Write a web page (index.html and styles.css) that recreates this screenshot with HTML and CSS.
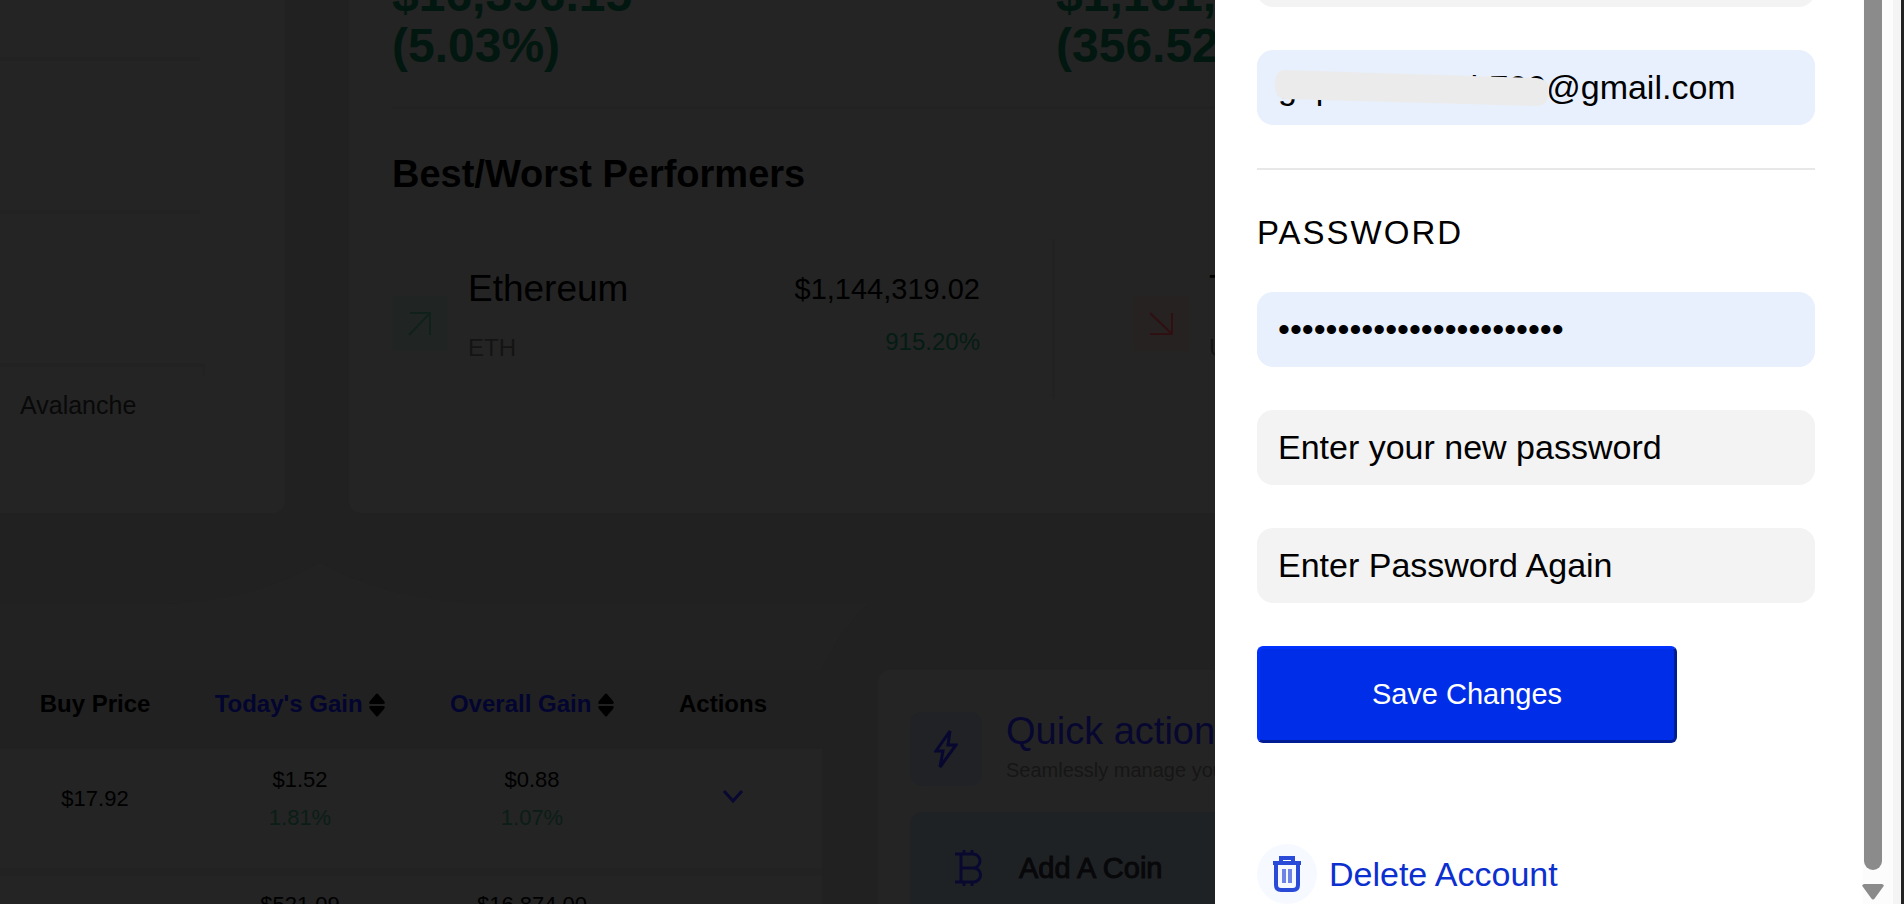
FILE: index.html
```html
<!DOCTYPE html>
<html lang="en">
<head>
    <meta charset="UTF-8">
    <meta name="viewport" content="width=device-width, initial-scale=1.0">
    <title>Account Settings</title>
    <link rel="stylesheet" href="styles.css">
</head>
<body>
    <main class="dashboard">
        <div class="top-row">
            <section class="card chart">
                <div class="grid-line"></div>
                <div class="grid-line"></div>
                <div class="grid-line last"></div>
                <p class="axis-label">Avalanche</p>
            </section>
            <section class="card summary">
                <div class="stats">
                    <p>$16,396.15<br>(5.03%)</p>
                    <p>$1,161,152.31<br>(356.52%)</p>
                </div>
                <h2>Best/Worst Performers</h2>
                <div class="performers">
                    <div class="performer best">
                        <span class="trend up">
                            <svg width="26" height="26" viewBox="0 0 26 26"><path d="M2 24L23 2M3 2h20v22"/></svg>
                        </span>
                        <div>
                            <p class="coin">Ethereum</p>
                            <p class="ticker">ETH</p>
                        </div>
                        <div class="value">
                            <p class="price">$1,144,319.02</p>
                            <p class="percent">915.20%</p>
                        </div>
                    </div>
                    <div class="performer worst">
                        <span class="trend down">
                            <svg width="26" height="26" viewBox="0 0 26 26"><path d="M2 2L24 23M24 2v21H2"/></svg>
                        </span>
                        <div>
                            <p class="coin">Tether</p>
                            <p class="ticker">USDT</p>
                        </div>
                    </div>
                </div>
            </section>
        </div>

        <div class="bottom-row">
            <section class="holdings">
                <svg class="hump" viewBox="0 0 870 110" preserveAspectRatio="none"><path d="M0 44H170Q260 38 320 2Q380 38 480 44H870Q845 60 822 110H0Z"/></svg>
                <table>
                    <thead>
                        <tr>
                            <th class="buy">Buy Price</th>
                            <th class="today"><a href="#">Today's Gain</a> <svg width="16" height="24" viewBox="0 0 16 24"><path d="M7 1q1-1 2 0l6 7q2 3-1 3H2q-3 0-1-3zM7 23q1 1 2 0l6-7q2-3-1-3H2q-3 0-1 3z"/></svg></th>
                            <th class="overall"><a href="#">Overall Gain</a> <svg width="16" height="24" viewBox="0 0 16 24"><path d="M7 1q1-1 2 0l6 7q2 3-1 3H2q-3 0-1-3zM7 23q1 1 2 0l6-7q2-3-1-3H2q-3 0-1 3z"/></svg></th>
                            <th class="actions">Actions</th>
                        </tr>
                    </thead>
                    <tbody>
                        <tr>
                            <td>$17.92</td>
                            <td>$1.52<span class="gain">1.81%</span></td>
                            <td>$0.88<span class="gain">1.07%</span></td>
                            <td class="actions">
                                <button class="expand" aria-label="Show actions">
                                    <svg width="24" height="18" viewBox="0 0 24 18"><path d="M3 3l9 10 9-10"/></svg>
                                </button>
                            </td>
                        </tr>
                        <tr>
                            <td></td>
                            <td>$521.09<span class="gain">1.85%</span></td>
                            <td>$16,874.00<span class="gain">143.20%</span></td>
                            <td></td>
                        </tr>
                    </tbody>
                </table>
            </section>
            <section class="card quick">
                <div class="quick-head">
                    <span class="bolt">
                        <svg width="24" height="40" viewBox="0 0 24 40"><path d="M16 2L2 22h7L6 38l16-22h-8z"/></svg>
                    </span>
                    <div>
                        <h3>Quick actions</h3>
                        <p>Seamlessly manage your portfolio</p>
                    </div>
                </div>
                <button class="add-coin">
                    <svg width="30" height="36" viewBox="0 0 30 36"><path d="M1 4h18a7 7 0 0 1 0 14H7M19 18a7 7 0 0 1 1 14H1M7 4v28M10 0v4M18 0v4M10 32v4M18 32v4"/></svg>
                    Add A Coin
                </button>
            </section>
        </div>
    </main>

    <aside class="drawer">
        <form class="settings">
            <input type="text" aria-label="Name">
            <div class="email">
                <input class="filled" type="text" aria-label="Email" value="g  p------------h700@gmail.com">
                <svg class="cover" width="278" height="42" viewBox="0 0 278 42"><path d="M10 2L262 10Q275 11 275 22Q275 38 262 38L10 31Q1 30 1 17Q1 3 10 2Z"/></svg>
            </div>
            <hr>
            <h2>PASSWORD</h2>
            <input class="filled" type="password" aria-label="Current password" value="xxxxxxxxxxxxxxxxxxxxxxxx">
            <input type="text" aria-label="New password" placeholder="Enter your new password">
            <input type="text" aria-label="Repeat new password" placeholder="Enter Password Again">
            <button class="save" type="button">Save Changes</button>
            <a class="delete" href="#">
                <span class="bin">
                    <svg width="30" height="36" viewBox="0 0 30 36"><path d="M1 7h28M9 6V2h12v4M4 8v21q0 5 5 5h12q5 0 5-5V8"/><path class="bars" d="M12 13v14M18 13v14"/></svg>
                </span>
                Delete Account
            </a>
        </form>
        <div class="scrollbar">
            <div class="thumb"></div>
            <svg width="22" height="16" viewBox="0 0 22 16"><path d="M2 0h18q3 1 1 3l-8 11q-2 3-4 0L1 3q-2-2 1-3z"/></svg>
        </div>
        <div class="edge"></div>
    </aside>
</body>
</html>
```
FILE: styles.css
```css
* {
    box-sizing: border-box;
}
body {
    margin: 0;
    display: flex;
    height: 100vh;
    overflow: hidden;
    background-color: #212121;
    color: #000;
    font-family: "Liberation Sans", Arial, sans-serif;
}
h2, h3, p {
    margin: 0;
    font-weight: normal;
}
svg {
    flex: none;
    fill: none;
}

/* dimmed dashboard */
.dashboard {
    flex: 1;
    min-width: 0;
    overflow: hidden;
    white-space: nowrap;
}
.card {
    background-color: #242424;
}
.top-row {
    display: grid;
    grid-template-columns: 285px 1fr;
    gap: 64px;
    height: 513px;
}
.chart {
    border-radius: 0 0 12px 0;
    padding-top: 57px;
}
.grid-line {
    width: 200px;
    height: 153px;
    border-top: 4px solid #222;
}
.grid-line.last {
    width: 205px;
    height: 13px;
    border-right: 3px solid #222;
}
.axis-label {
    margin: 14px 0 0 20px;
    font-size: 25px;
    line-height: 30px;
    color: #090909;
}
.summary {
    min-width: 0;
    padding-left: 43px;
    border-radius: 0 0 0 12px;
    overflow: hidden;
}
.stats {
    display: grid;
    grid-template-columns: 664px 1fr;
    margin-top: -31px;
    padding-bottom: 35px;
    border-bottom: 3px solid #222;
    font-size: 48px;
    line-height: 51px;
    color: #02170f;
}
.stats p {
    font-weight: bold;
}
.summary h2 {
    margin: 43px 0;
    font-size: 38px;
    font-weight: bold;
    line-height: 44px;
}
.performers {
    display: flex;
    height: 160px;
}
.performer {
    display: flex;
    flex: none;
    gap: 20px;
    padding-top: 28px;
}
.best {
    width: 660px;
    padding-right: 72px;
}
.worst {
    padding-left: 78px;
    border-left: 3px solid #222;
}
.trend {
    display: flex;
    align-items: center;
    justify-content: center;
    width: 56px;
    height: 55px;
    margin-top: 29px;
    border-radius: 4px;
}
.trend svg {
    stroke-width: 2;
}
.up {
    background-color: #202423;
    stroke: #10211b;
}
.down {
    background-color: #262222;
    stroke: #300f12;
}
.value {
    margin-left: auto;
    text-align: right;
}
.coin {
    font-size: 37px;
    line-height: 44px;
}
.price {
    font-size: 29px;
    line-height: 44px;
}
.ticker {
    margin-top: 22px;
    font-size: 24px;
    line-height: 30px;
    color: #141414;
}
.percent {
    margin-top: 16px;
    font-size: 24px;
    line-height: 30px;
    color: #051c14;
}
.bottom-row {
    display: grid;
    grid-template-columns: 822px 1fr;
    gap: 56px;
    padding-top: 157px;
}
.holdings {
    position: relative;
}
.hump {
    position: absolute;
    left: 0;
    bottom: 100%;
    width: 870px;
    height: 110px;
    fill: #222;
}
table {
    width: 100%;
    table-layout: fixed;
    border-collapse: collapse;
    font-size: 22px;
    line-height: 38px;
    text-align: center;
}
th {
    height: 79px;
    padding: 0 0 12px;
    font-size: 24px;
}
th svg {
    fill: #000;
    vertical-align: middle;
}
th a {
    color: #030530;
    text-decoration: none;
}
.buy {
    width: 190px;
}
.today {
    width: 220px;
}
.overall {
    width: 244px;
}
td {
    height: 123px;
    padding: 0 0 20px;
    background-color: #242424;
    border-bottom: 8px solid #222;
}
.actions {
    padding-right: 30px;
}
.gain {
    display: block;
    color: #0b1d17;
}
.expand {
    padding: 0 0 0 20px;
    border: 0;
    background: none;
}
.expand svg {
    stroke: #080830;
    stroke-width: 3;
}
.quick {
    min-width: 0;
    padding: 42px 0 0 32px;
    border-radius: 12px 0 0 0;
    overflow: hidden;
}
.quick-head {
    display: flex;
    gap: 24px;
    margin-bottom: 26px;
}
.bolt {
    flex: none;
    display: flex;
    align-items: center;
    justify-content: center;
    width: 72px;
    height: 74px;
    border-radius: 12px;
    background-color: #202225;
}
.bolt svg {
    stroke: #070730;
    stroke-width: 3;
}
.quick h3 {
    font-size: 38px;
    line-height: 38px;
    color: #070730;
}
.quick p {
    margin-top: 8px;
    font-size: 20px;
    line-height: 24px;
    color: #161616;
}
.add-coin {
    display: flex;
    align-items: center;
    gap: 35px;
    width: 100%;
    height: 112px;
    padding: 0 44px;
    border: 0;
    border-radius: 12px 0 0 12px;
    background-color: #1f2225;
    color: #08080a;
    font-family: inherit;
    font-size: 29px;
    -webkit-text-stroke: 1px #08080a;
}
.add-coin svg {
    stroke: #090930;
    stroke-width: 3;
}

/* settings drawer */
.drawer {
    flex: none;
    display: flex;
    width: 689px;
    background-color: #fff;
    overflow: hidden;
}
.settings {
    flex: 1;
    display: flex;
    flex-direction: column;
    padding: 0 48px 0 42px;
    margin-top: -68px;
}
.settings input {
    flex: none;
    width: 100%;
    height: 75px;
    margin-bottom: 43px;
    padding: 0 21px 1px;
    border: 0;
    border-radius: 16px;
    background-color: #f3f3f3;
    color: #000;
    font-family: inherit;
    font-size: 34px;
}
.settings input::placeholder {
    color: #000;
    opacity: 1;
}
.settings input.filled {
    background-color: #e8f0fe;
}
.email {
    position: relative;
}
.cover {
    position: absolute;
    left: 17px;
    top: 18px;
    fill: #ebebeb;
}
.settings hr {
    width: 100%;
    margin: 0;
    border: 0;
    border-top: 2px solid #e8e8e8;
}
.settings h2 {
    margin: 43px 0 39px;
    font-size: 33px;
    letter-spacing: 2px;
    line-height: 40px;
}
.save {
    flex: none;
    width: 420px;
    height: 97px;
    border: 3px outset #002ee8;
    border-radius: 6px;
    background-color: #002ee8;
    color: #fff;
    font-family: inherit;
    font-size: 29px;
}
.delete {
    display: flex;
    align-items: center;
    gap: 12px;
    margin-top: 101px;
    color: #0c2fd0;
    font-size: 34px;
    line-height: 40px;
    text-decoration: none;
}
.bin {
    display: flex;
    align-items: center;
    justify-content: center;
    width: 60px;
    height: 60px;
    border-radius: 50%;
    background-color: #f6f9ff;
}
.bin svg {
    stroke: #2a4bd8;
    stroke-width: 4;
}
.bin .bars {
    stroke: #6d84e6;
}
.scrollbar {
    display: flex;
    flex-direction: column;
    align-items: center;
    width: 30px;
    background-color: #fcfcfc;
    padding-right: 10px;
}
.thumb {
    width: 18px;
    height: calc(100vh - 34px);
    margin-bottom: 14px;
    border-radius: 0 0 9px 9px;
    background-color: #8b8b8b;
}
.scrollbar svg {
    fill: #8b8b8b;
}
.edge {
    width: 11px;
    background-color: #f4f4f4;
    border-right: 3px solid #222;
}
```
